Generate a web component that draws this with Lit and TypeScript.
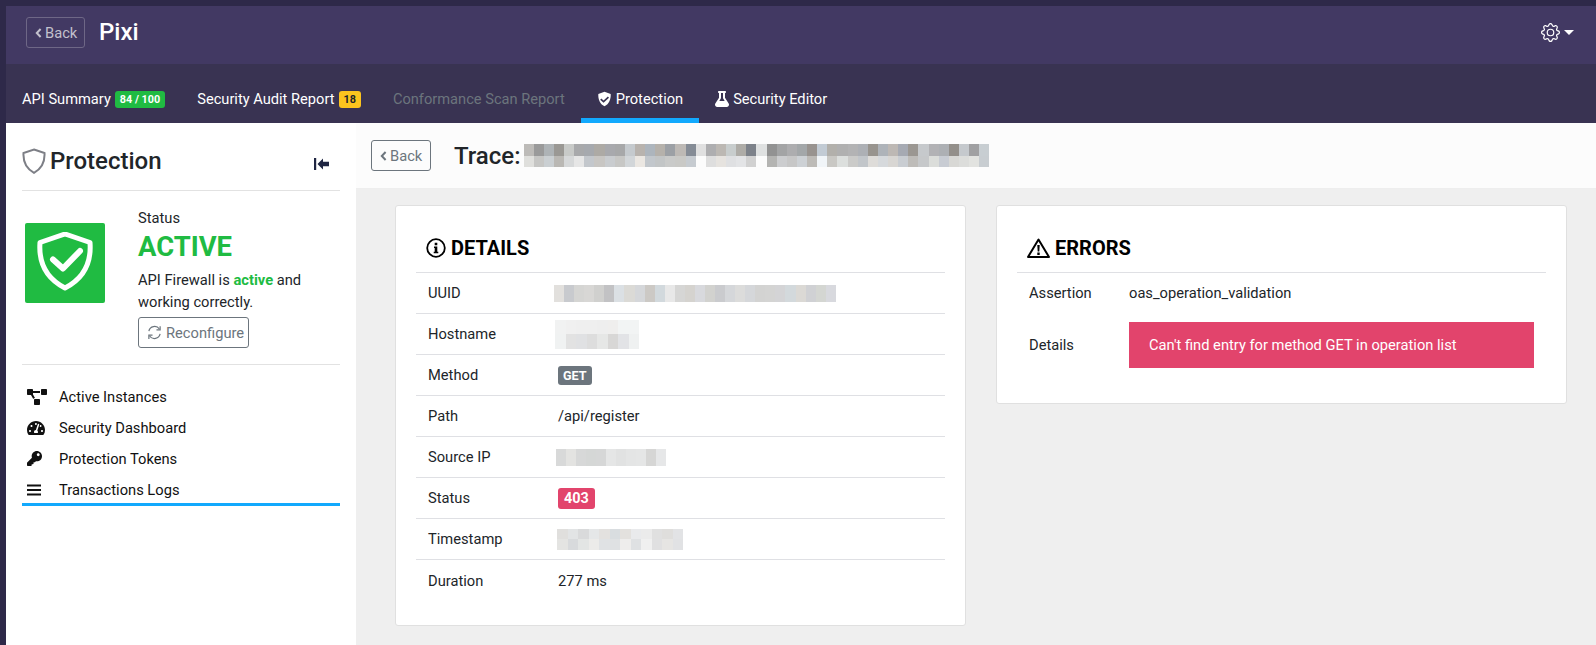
import { LitElement, html, css, svg } from 'lit';
import { customElement } from 'lit/decorators.js';

const ICONS = {
  diagram: svg`<svg viewBox="0 0 640 512" width="20" height="16"><path fill="currentColor" d="M384 320H256c-17.67 0-32 14.33-32 32v128c0 17.67 14.33 32 32 32h128c17.67 0 32-14.33 32-32V352c0-17.67-14.33-32-32-32zM192 32c0-17.67-14.33-32-32-32H32C14.33 0 0 14.33 0 32v128c0 17.67 14.33 32 32 32h95.72l73.16 128.04C211.98 300.98 232.4 288 256 288h.28L192 175.51V128h224V64H192V32zM608 0H480c-17.67 0-32 14.33-32 32v128c0 17.67 14.33 32 32 32h128c17.67 0 32-14.33 32-32V32c0-17.67-14.33-32-32-32z"/></svg>`,
  gauge: svg`<svg viewBox="0 0 576 512" width="18" height="16"><path fill="currentColor" d="M288 32C128.94 32 0 160.94 0 320c0 52.8 14.25 102.26 39.06 144.8 5.61 9.62 16.3 15.2 27.44 15.2h443c11.14 0 21.83-5.58 27.44-15.2C561.75 422.26 576 372.8 576 320c0-159.06-128.94-288-288-288zm0 64c14.71 0 26.58 10.13 30.32 23.65-1.11 2.26-2.64 4.23-3.45 6.67l-9.22 27.67c-5.13 3.49-10.97 6.01-17.64 6.01-17.67 0-32-14.33-32-32S270.33 96 288 96zM96 384c-17.67 0-32-14.33-32-32s14.33-32 32-32 32 14.33 32 32-14.33 32-32 32zm48-160c-17.67 0-32-14.33-32-32s14.33-32 32-32 32 14.33 32 32-14.33 32-32 32zm246.77-72.41l-61.33 184C343.13 347.33 352 364.54 352 384c0 11.72-3.38 22.55-8.88 32H232.88c-5.5-9.45-8.88-20.28-8.88-32 0-33.94 26.5-61.43 59.9-63.59l61.34-184.01c4.17-12.56 17.73-19.45 30.36-15.17 12.57 4.19 19.35 17.79 15.17 30.36zm14.66 57.2l15.52-46.55c3.47-1.29 7.13-2.23 11.05-2.23 17.67 0 32 14.33 32 32s-14.33 32-32 32c-11.38-.01-20.89-6.28-26.57-15.22zM480 384c-17.67 0-32-14.33-32-32s14.33-32 32-32 32 14.33 32 32-14.33 32-32 32z"/></svg>`,
  key: svg`<svg viewBox="0 0 512 512" width="15" height="15"><path fill="currentColor" d="M512 176.001C512 273.203 433.202 352 336 352c-11.22 0-22.19-1.062-32.827-3.069l-24.012 27.014A23.999 23.999 0 0 1 261.223 384H224v40c0 13.255-10.745 24-24 24h-40v40c0 13.255-10.745 24-24 24H24c-13.255 0-24-10.745-24-24v-78.059c0-6.365 2.529-12.47 7.029-16.971l161.802-161.802C163.108 213.814 160 195.271 160 176 160 78.798 238.797.001 335.999 0 433.488-.001 512 78.511 512 176.001zM336 128c0 26.51 21.49 48 48 48s48-21.49 48-48-21.49-48-48-48-48 21.49-48 48z"/></svg>`,
  bars: svg`<svg viewBox="0 0 14 12" width="14" height="12"><path fill="currentColor" d="M0 .5h14v2H0zM0 5h14v2H0zM0 9.5h14v2H0z"/></svg>`,
  flask: svg`<svg viewBox="0 0 448 512" width="14" height="16"><path fill="currentColor" d="M437.2 403.5L320 215V64h8c13.3 0 24-10.7 24-24V24c0-13.3-10.7-24-24-24H120c-13.3 0-24 10.7-24 24v16c0 13.3 10.7 24 24 24h8v151L10.8 403.5C-18.5 450.6 15.3 512 70.9 512h306.2c55.7 0 89.4-61.5 60.1-108.5zM137.9 320l48.2-77.6c3.7-5.2 5.8-11.6 5.8-18.4V64h64v160c0 6.9 2.2 13.2 5.8 18.4l48.2 77.6h-172z"/></svg>`,
  shieldCheck: svg`<svg viewBox="0 0 16 16" width="15" height="16"><path fill="currentColor" fill-rule="evenodd" d="M8 .2 14.6 2.6c.3 5.600-1.600 10.600-6.600 13.200C3 13.200 1.100 8.200 1.400 2.600zM11.600 5.300 7 9.600 4.600 7.400 3.400 8.700 7 12l5.800-5.400z"/></svg>`,
  caretLeft: svg`<svg viewBox="0 0 7 10" width="7" height="10"><path fill="none" stroke="currentColor" stroke-width="2" d="M5.600 1 1.800 5l3.800 4"/></svg>`,
  collapse: svg`<svg viewBox="0 0 15 12" width="15" height="12"><path fill="currentColor" d="M0 0h2.200v12H0zM3.500 6 9 .6V3.800h6v4.400H9v3.200z"/></svg>`,
  sync: svg`<svg viewBox="0 0 16 16" width="15" height="15"><g fill="none" stroke="currentColor" stroke-width="1.300"><path d="M2 6.500A6.200 6.200 0 0 1 13.200 4.300"/><path d="M14 1.200v3.900h-3.900"/><path d="M14 9.500A6.200 6.200 0 0 1 2.800 11.700"/><path d="M2 14.800v-3.900h3.900"/></g></svg>`,
  info: svg`<svg viewBox="0 0 20 20" width="20" height="20"><circle cx="10" cy="10" r="8.800" fill="none" stroke="currentColor" stroke-width="1.800"/><path fill="currentColor" d="M8.700 4.800h2.600v2.400H8.700zM8 8.500h3.300v5.200h1v1.500H7.700v-1.500h1v-3.700H8z"/></svg>`,
  warning: svg`<svg viewBox="0 0 23 20" width="23" height="20"><path fill="none" stroke="currentColor" stroke-width="2" stroke-linejoin="round" d="M11.500 1.500 1 19h21z"/><path fill="currentColor" d="M10.300 7h2.400l-.4 6.500h-1.600zM10.300 14.500h2.400v2.400h-2.400z"/></svg>`,
  gear: svg`<svg viewBox="0 0 16 16" width="19" height="19"><path fill="currentColor" d="M8 4.754a3.246 3.246 0 1 0 0 6.492 3.246 3.246 0 0 0 0-6.492zM5.754 8a2.246 2.246 0 1 1 4.492 0 2.246 2.246 0 0 1-4.492 0z"/><path fill="currentColor" d="M9.796 1.343c-.527-1.790-3.065-1.790-3.592 0l-.094.319a.873.873 0 0 1-1.255.520l-.292-.160c-1.640-.892-3.433.902-2.540 2.541l.159.292a.873.873 0 0 1-.520 1.255l-.319.094c-1.790.527-1.790 3.065 0 3.592l.319.094a.873.873 0 0 1 .520 1.255l-.160.292c-.892 1.640.901 3.434 2.541 2.540l.292-.159a.873.873 0 0 1 1.255.520l.094.319c.527 1.790 3.065 1.790 3.592 0l.094-.319a.873.873 0 0 1 1.255-.520l.292.160c1.640.893 3.434-.902 2.540-2.541l-.159-.292a.873.873 0 0 1 .520-1.255l.319-.094c1.790-.527 1.790-3.065 0-3.592l-.319-.094a.873.873 0 0 1-.520-1.255l.160-.292c.893-1.640-.902-3.433-2.541-2.540l-.292.159a.873.873 0 0 1-1.255-.520l-.094-.319zm-2.633.283c.246-.835 1.428-.835 1.674 0l.094.319a1.873 1.873 0 0 0 2.693 1.115l.291-.160c.764-.415 1.600.420 1.184 1.185l-.159.292a1.873 1.873 0 0 0 1.116 2.692l.318.094c.835.246.835 1.428 0 1.674l-.319.094a1.873 1.873 0 0 0-1.115 2.693l.160.291c.415.764-.420 1.600-1.185 1.184l-.291-.159a1.873 1.873 0 0 0-2.693 1.116l-.094.318c-.246.835-1.428.835-1.674 0l-.094-.319a1.873 1.873 0 0 0-2.692-1.115l-.292.160c-.764.415-1.600-.420-1.184-1.185l.159-.291A1.873 1.873 0 0 0 1.945 8.930l-.319-.094c-.835-.246-.835-1.428 0-1.674l.319-.094A1.873 1.873 0 0 0 3.060 4.377l-.160-.292c-.415-.764.420-1.600 1.185-1.184l.292.159a1.873 1.873 0 0 0 2.692-1.115l.094-.319z"/></svg>`,
};

// colour tiles for the redacted values, row by row
const TRACE = 'bdbbb8 9a9a9a aeb3b6 9a9894 c8cac8 a8a9ab a6a9ae adaaa5 a8a9ad a7a8a9 c5cace b8b3ae adb5bd b5b1ab 9ca0a5 bdb9b5 858c96 e0e0e0 aeaeb0 bcb8b3 c8cdcd aeaca7 7d828a dfe1e1 929292 a3a4a5 adadaf a3a7a9 98938f c2cbd4 b2b0ab b0b0b0 b3b3b4 adb0b5 98948e aeb3b9 bdb8b4 a6aab3 9b9792 c6c9cc b2b2b5 adb0b4 938f8a c5c9cd a0a0a2 c8ced2 dfdfdc c6c6c4 cacfd2 bab8b4 d6d8d9 e6e6e6 c3c7cc c8c6c3 c9cccf c7c7c5 d2d6d9 ebe7e2 c2c7cc c2c5c6 c9cac9 c9c9c6 c6cbd0 fcfcfc dedede e6e3df dfe0e2 e3e4e6 d1d1d1 fcfcfc b4b4b2 cccdcf c7c7c7 cdd1d5 bdbbb7 f1f5f8 c9c8c4 dcdfdd cbcbc9 c2c6ca dedcd9 d6d9dc d8d6d3 c9cdd2 bebcb9 c6c8ca dbddda c8ccd3 d8d8d5 dcdddb e2e3e0 c8cdd1';
const UUID = 'e2e0dd c8cace d5d5d3 d8d7d5 d0d0ce c2c2c4 dbe0e4 dbdad6 d5d7da ccc9c5 d2d9dd e8e8e8 d6d6d5 d5d3cf d8d9dd d2d2cf cacbce d5d7da dcdcdb d5d7da d3d3d2 d4d4d3 d4d4d6 d3d9dc dbd9d5 d0d1d4 d4d6d2 d8d9de';
const HOST = 'f1f2f2 f0f0f0 efefef efefef eeeeee efeeed f2f4f4 f2f4f4 f0f2f2 e2e2e2 e0e1e3 dddddd e6e7e6 d8d7d6 e2e3e6 eff1f1';
const IP = 'd8d9d9 e3e3e1 d7d8d8 d5d7d6 d6d7d7 e5e6e6 e1e2e2 e4e5e5 e5e6e6 d6d6d5 e6e7e8';
const TIME = 'e0dfdd e2e4e5 d9dadb e5e7e8 e3e1df d9dde0 e3e1de e9eaec ebebeb e0e0e0 dfdedc e2e3e5 e4e4e2 d8dadc e3e5e4 ecebe9 e0e2e4 dfe1e3 eeedec dfe1e3 f0f0f0 e0e0e1 e6e5e3 e1e2e4';

function tiles(colors: string, cols: number, w: number, h: number, shift = 0) {
  return html`<div
    class="tiles"
    style="grid-template-columns:repeat(${cols},${w}px);grid-auto-rows:${h}px;margin-left:${shift}px"
  >
    ${colors.split(' ').map((c) => html`<i style="background:#${c}"></i>`)}
  </div>`;
}

@customElement('app-root')
export class AppRoot extends LitElement {
  static styles = css`
    :host {
      display: block;
      height: 645px;
      overflow: hidden;
      background: #2e2949;
      padding: 6px 0 0 6px;
      box-sizing: border-box;
      font-family: Roboto, sans-serif;
      font-size: 14.7px;
      color: #212529;
    }
    svg { display: block; flex: none; }
    .top {
      height: 58px;
      box-sizing: border-box;
      background: #423963;
      display: flex;
      align-items: center;
      padding: 0 22px 5px 20px;
      color: #fff;
    }
    .btn {
      display: flex;
      align-items: center;
      box-sizing: border-box;
      height: 31px;
      border: 1px solid #6c757d;
      border-radius: 3px;
      color: #6c757d;
      padding: 0 8px;
      gap: 3px;
    }
    .top .btn { width: 59px; color: #c3c1cd; border-color: #6e6786; }
    .top h1 { margin: 0 0 0 14px; font-size: 24px; font-weight: 500; position: relative; top: -1px; }
    .settings { margin-left: auto; display: flex; align-items: center; gap: 4px; }
    .caret { border: 5px solid transparent; border-top-color: #fff; border-bottom: 0; }
    .tabs {
      height: 59px;
      background: #393352;
      display: flex;
      color: #fff;
      font-size: 14.65px;
    }
    .tab {
      display: flex;
      align-items: center;
      gap: 4px;
      padding: 16px 16px 0;
      box-sizing: border-box;
      border-bottom: 5px solid transparent;
    }
    .tab.on { border-bottom-color: #12a9fd; }
    .tab.off { color: #6c757d; }
    .badge {
      display: inline-block;
      border-radius: 3px;
      font-size: 10.8px;
      font-weight: 700;
      line-height: 17px;
      padding: 0 5px;
      color: #fff;
    }
    .green { background: #20bb42; }
    .yellow { background: #fcc41e; color: #212529; }
    .body { display: flex; height: 522px; }
    .side {
      width: 350px;
      flex: none;
      box-sizing: border-box;
      background: #fff;
      padding: 0 16px;
    }
    .side-head {
      height: 68px;
      box-sizing: border-box;
      padding-top: 8px;
      display: flex;
      align-items: center;
      border-bottom: 1px solid #e2e2e2;
      gap: 4px;
    }
    .side-head h2 { margin: 0; font-size: 24px; font-weight: 500; }
    .side-head svg:last-child { margin-left: auto; margin-right: 11px; margin-top: 7px; color: #1f2542; }
    .status {
      display: flex;
      height: 174px;
      box-sizing: border-box;
      border-bottom: 1px solid #e2e2e2;
      padding: 16px 0 0 3px;
    }
    .logo {
      width: 80px;
      height: 80px;
      margin-top: 16px;
      border-radius: 2px;
      background: #20bb42;
      display: flex;
      align-items: center;
      justify-content: center;
      flex: none;
    }
    .status-text { margin-left: 33px; line-height: 22px; }
    .status-text .big { color: #20bb42; font-size: 27.4px; font-weight: 700; line-height: 36px; }
    .status-text b { color: #20bb42; font-weight: 700; }
    .status-text p { margin: 4px 0 4px; }
    .status-text .btn { width: 111px; padding: 0 8px; gap: 4px; }
    .menu { padding-top: 16px; }
    .item {
      display: flex;
      align-items: center;
      height: 31px;
      color: #111;
    }
    .item span { width: 37px; padding-left: 5px; box-sizing: border-box; flex: none; }
    .item.on { height: 29px; box-sizing: border-box; padding-top: 2px; }
    .line { height: 3px; background: #12a9fd; }
    .main { flex: 1; background: #efefef; min-width: 0; }
    .trace {
      height: 66px;
      box-sizing: border-box;
      background: #fcfcfc;
      border-bottom: 1px solid #eee;
      display: flex;
      align-items: center;
      padding-left: 15px;
    }
    .trace .btn { width: 60px; }
    .trace h3 { margin: 0 3px 0 23px; font-size: 24px; font-weight: 500; }
    .cards { display: flex; align-items: flex-start; gap: 30px; padding: 16px 29px 0 39px; }
    .card {
      flex: 1;
      box-sizing: border-box;
      background: #fff;
      border: 1px solid #e0e0e0;
      border-radius: 3px;
      padding: 0 20px;
    }
    .card h4 {
      margin: 0;
      height: 67px;
      box-sizing: border-box;
      padding: 17px 0 0 10px;
      display: flex;
      align-items: center;
      gap: 5px;
      font-size: 20px;
      font-weight: 700;
      color: #000;
      border-bottom: 1px solid #dfe0e4;
    }
    .details { height: 421px; }
    .row {
      height: 41px;
      box-sizing: border-box;
      display: flex;
      align-items: center;
      padding-left: 12px;
      border-bottom: 1px solid #dfe0e4;
    }
    .row:last-child { border-bottom: 0; }
    .row label { width: 130px; flex: none; }
    .tag { font-size: 12.6px; line-height: 19px; padding: 0 5px; font-weight: 700; }
    .grey { background: #6c757d; }
    .red { background: #e2446c; }
    .tag.big { font-size: 14.4px; line-height: 21px; padding: 0 6px; }
    .errors { height: 199px; }
    .erow { display: flex; align-items: center; padding-left: 12px; }
    .erow label { width: 100px; flex: none; }
    .erow.first { height: 39px; }
    .alert {
      flex: none;
      width: 405px;
      height: 46px;
      margin-top: 10px;
      padding-left: 20px;
      box-sizing: border-box;
      display: flex;
      align-items: center;
      background: #e2446c;
      color: #fff;
    }
    .erow.second label { margin-top: 10px; }
    .tiles { display: grid; }
    .tiles i { display: block; }
  `;

  render() {
    return html`
      <div class="top">
        <div class="btn">${ICONS.caretLeft}Back</div>
        <h1>Pixi</h1>
        <div class="settings">${ICONS.gear}<div class="caret"></div></div>
      </div>
      <div class="tabs">
        <div class="tab">API Summary <span class="badge green">84 / 100</span></div>
        <div class="tab">Security Audit Report <span class="badge yellow">18</span></div>
        <div class="tab off">Conformance Scan Report</div>
        <div class="tab on">${ICONS.shieldCheck}Protection</div>
        <div class="tab">${ICONS.flask}Security Editor</div>
      </div>
      <div class="body">
        <div class="side">
          <div class="side-head">
            <svg viewBox="0 0 24 26" width="24" height="26"><path fill="none" stroke="#7d7f86" stroke-width="2" d="M12 1.500 22.500 5c.5 8.500-2.500 15.500-10.500 19.800C4 20.500 1 13.500 1.500 5z"/></svg>
            <h2>Protection</h2>
            ${ICONS.collapse}
          </div>
          <div class="status">
            <div class="logo">
              <svg viewBox="0 1 58 62" width="58" height="62"><path fill="none" stroke="#fff" stroke-width="5" stroke-linejoin="round" d="M29 3 54 11.500c1.500 20-6.500 36-25 45.500C10.500 47.500 2.500 31.500 4 11.500z"/><path fill="none" stroke="#fff" stroke-width="6" stroke-linecap="round" stroke-linejoin="round" d="M17 28.500 27 37.500 44 20"/></svg>
            </div>
            <div class="status-text">
              <div>Status</div>
              <div class="big">ACTIVE</div>
              <p>API Firewall is <b>active</b> and<br />working correctly.</p>
              <div class="btn">${ICONS.sync}Reconfigure</div>
            </div>
          </div>
          <div class="menu">
            <div class="item"><span>${ICONS.diagram}</span>Active Instances</div>
            <div class="item"><span>${ICONS.gauge}</span>Security Dashboard</div>
            <div class="item"><span>${ICONS.key}</span>Protection Tokens</div>
            <div class="item on"><span>${ICONS.bars}</span>Transactions Logs</div>
            <div class="line"></div>
          </div>
        </div>
        <div class="main">
          <div class="trace">
            <div class="btn">${ICONS.caretLeft}Back</div>
            <h3>Trace:</h3>
            ${tiles(TRACE, 46, 10.13, 11.5)}
          </div>
          <div class="cards">
            <div class="card details">
              <h4>${ICONS.info}DETAILS</h4>
              <div class="row"><label>UUID</label>${tiles(UUID, 28, 10.07, 17, -4)}</div>
              <div class="row"><label>Hostname</label>${tiles(HOST, 8, 10.5, 14.5, -3)}</div>
              <div class="row"><label>Method</label><span class="badge grey tag">GET</span></div>
              <div class="row"><label>Path</label>/api/register</div>
              <div class="row"><label>Source IP</label>${tiles(IP, 11, 10, 17, -2)}</div>
              <div class="row"><label>Status</label><span class="badge red tag big">403</span></div>
              <div class="row"><label>Timestamp</label>${tiles(TIME, 12, 10.5, 10.5, -1)}</div>
              <div class="row"><label>Duration</label>277 ms</div>
            </div>
            <div class="card errors">
              <h4>${ICONS.warning}ERRORS</h4>
              <div class="erow first"><label>Assertion</label>oas_operation_validation</div>
              <div class="erow second"><label>Details</label><div class="alert">Can't find entry for method GET in operation list</div></div>
            </div>
          </div>
        </div>
      </div>
    `;
  }
}
